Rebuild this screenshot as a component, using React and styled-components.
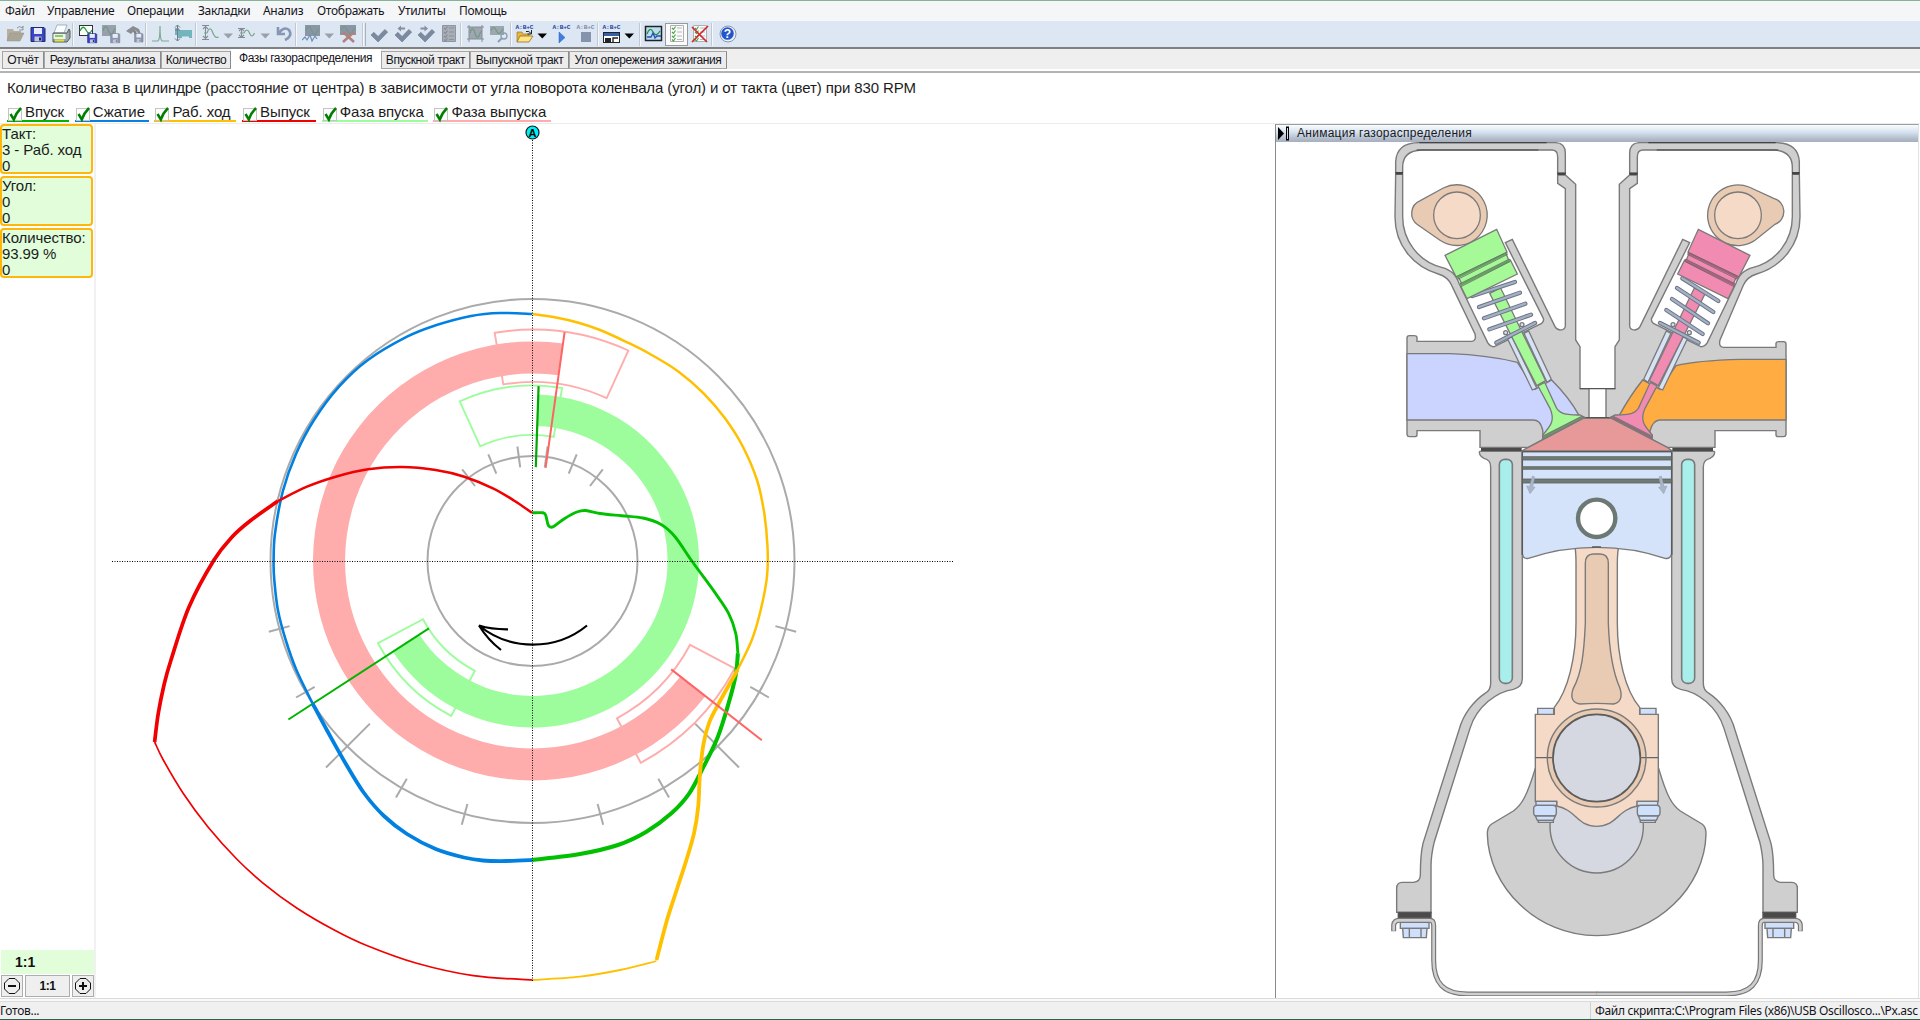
import React from 'react';
import styled, { createGlobalStyle } from 'styled-components';

const Global = createGlobalStyle`
  * { box-sizing: border-box; }
  html, body { margin: 0; padding: 0; }
  body { width: 1920px; height: 1020px; overflow: hidden; background: #fff; }
  svg { display: block; }
`;

const Window = styled.div`
  display: flex;
  flex-direction: column;
  width: 1920px;
  height: 1020px;
  overflow: hidden;
  border-top: 1px solid #86b396;
  border-bottom: 1px solid #2c6450;
  font-family: "Liberation Sans", Arial, sans-serif;
  color: #1c1c1c;
  background: #fff;
`;

const MenuBar = styled.nav`
  display: flex;
  height: 20px;
  flex: none;
  padding-left: 5px;
  background: #f5f6f8;
  font: 12px/20px "Noto Sans", sans-serif;
  color: #15151c;
`;

const MenuItem = styled.span`
  width: ${(p) => p.$w}px;
  flex: none;
  white-space: nowrap;
  letter-spacing: ${(p) => p.$ls || 0}px;
`;

const ToolBar = styled.div`
  display: flex;
  align-items: center;
  height: 26px;
  flex: none;
  padding-left: 3px;
  background: #dde7f4;
`;

const Tool = styled.span`
  display: flex;
  align-items: center;
  justify-content: center;
  flex: none;
  width: ${(p) => p.$w || 23}px;
  height: 23px;
  background: ${(p) => (p.$on ? '#fbfbfb' : 'transparent')};
  border: ${(p) => (p.$on ? '1px solid #9a9a9a' : '0')};
`;

const Sep = styled.span`
  flex: none;
  width: ${(p) => p.$w || 4}px;
  height: 23px;
  border-left: 1px solid #c3c8d0;
  border-right: ${(p) => (p.$double ? '1px solid #a9b0ba' : '0')};
  box-shadow: inset 1px 0 0 #f6f8fb;
  background-clip: content-box;
`;

const TabStrip = styled.div`
  display: flex;
  align-items: flex-end;
  height: 22px;
  flex: none;
  padding-left: 2px;
  background: #efefef;
  border-top: 2px solid #808080;
`;

const Tab = styled.button`
  width: ${(p) => p.$w}px;
  height: ${(p) => (p.$active ? 20 : 18)}px;
  margin: 0;
  padding: ${(p) => (p.$active ? '0 0 3px' : '0 0 1px')};
  border: 1px solid ${(p) => (p.$active ? '#fff' : '#a6a6a6')};
  border-left-width: ${(p) => (p.$active ? 0 : 1)}px;
  border-right-color: ${(p) => (p.$active ? '#fff' : '#8a8a8a')};
  background: ${(p) => (p.$active ? '#fff' : '#ececec')};
  font: 12px/14px "Liberation Sans", Arial, sans-serif;
  letter-spacing: ${(p) => p.$ls || 0}px;
  color: #15151c;
  white-space: nowrap;
  text-align: center;
`;

const TabEdge = styled.div`
  height: 4px;
  flex: none;
  background: #fff;
  border-bottom: 2px solid #b4b4b4;
`;

const Caption = styled.h1`
  margin: 0;
  height: 33px;
  flex: none;
  padding: 6px 0 0 7px;
  font-size: 15px;
  line-height: 18px;
  font-weight: 400;
  white-space: nowrap;
  letter-spacing: ${(p) => p.$ls}px;
`;

const Legend = styled.div`
  display: flex;
  gap: 5.7px;
  height: 17px;
  flex: none;
  padding-left: 7px;
`;

const LegendItem = styled.label`
  display: flex;
  width: ${(p) => p.$w}px;
  height: 16px;
  border-bottom: 2px solid ${(p) => p.$c};
  font-size: 15px;
  line-height: 15px;
  white-space: nowrap;
`;

const LegendText = styled.span`
  margin: -2px 0 0 2px;
  letter-spacing: -0.1px;
`;

const Work = styled.main`
  display: flex;
  flex: 1;
  min-height: 0;
  border-top: 1px solid #ececec;
`;

const Side = styled.aside`
  display: flex;
  flex-direction: column;
  width: 96px;
  flex: none;
  border-right: 2px solid #f1f1f1;
  padding: 0 0 0 1px;
`;

const Card = styled.div`
  width: 93px;
  height: 50px;
  margin: 0 0 2px -1px;
  padding: 0;
  border: 2px solid #ffb60a;
  border-radius: 4px;
  background: #e1fdda;
  font-size: 15px;
  line-height: 16px;
  letter-spacing: -0.1px;
  white-space: nowrap;
  overflow: hidden;
`;

const Scale = styled.div`
  margin-top: auto;
  height: 24px;
  padding-left: 14px;
  background: #e1fdda;
  font: bold 14px/24px "Liberation Sans", sans-serif;
  color: #111;
`;

const ZoomRow = styled.div`
  display: flex;
  gap: 2px;
  padding-top: 1px;
  margin-bottom: 1px;
`;

const ZoomButton = styled.button`
  display: flex;
  align-items: center;
  justify-content: center;
  width: ${(p) => p.$w}px;
  height: 22px;
  padding: 0;
  border: 1px solid #adadad;
  background: #efefef;
  font: bold 12px "Liberation Sans", sans-serif;
  letter-spacing: -0.4px;
  color: #111;
`;

const ChartPane = styled.section`
  width: 1179px;
  flex: none;
`;

const EnginePane = styled.section`
  display: flex;
  flex-direction: column;
  width: 644px;
  flex: none;
  border-left: 1px solid #8a8a8a;
  border-right: 1px solid #e2e2e2;
  border-top: 1px solid #9d9d9d;
`;

const PaneHeader = styled.header`
  display: flex;
  align-items: center;
  gap: 6px;
  height: 17px;
  flex: none;
  padding-left: 2px;
  background: linear-gradient(#fbfcfe, #d3e0ef 45%, #b3bccb 80%, #a6afbf);
  font: 12px/17px "Liberation Sans", Arial, sans-serif;
  letter-spacing: 0.27px;
  color: #1a1a1a;
`;

const Status = styled.footer`
  display: flex;
  justify-content: space-between;
  height: 21px;
  flex: none;
  border-top: 1px solid #dadada;
  box-shadow: inset 0 2px 0 #fafafa, inset 0 3px 0 #dadada;
  background: #f0f0f0;
  font: 12px/18px "Noto Sans", sans-serif;
  color: #15151c;
`;

const StatusCell = styled.span`
  width: ${(p) => p.$w}px;
  margin-top: 3px;
  padding-left: ${(p) => p.$pad || 0}px;
  border-left: ${(p) => (p.$line ? '1px solid #d0d0d0' : '0')};
  letter-spacing: ${(p) => p.$ls || 0}px;
  white-space: nowrap;
  overflow: hidden;
`;

const Drawing = styled.svg`
  path, circle, rect, line, polygon, ellipse, polyline { vector-effect: non-scaling-stroke; }
`;

/* ---------- toolbar ---------- */

const Ic = ({ children }) => (
  <svg width="20" height="20" viewBox="0 0 20 20" fill="none">{children}</svg>
);
const Drop = ({ on }) => (
  <Tool $w={13}>
    <svg width="13" height="20" viewBox="0 0 13 20"><path d="M1.5 9.5h9.5l-4.700 5z" fill={on ? '#000' : '#9a9fa8'} /></svg>
  </Tool>
);
const Abc = ({ c = '#1c3f9c' }) => (
  <text x="0.5" y="5" fontFamily="Liberation Mono, monospace" fontWeight="700" fontSize="6.2" textLength="18" fill={c}>A:B+C</text>
);
const Disk = ({ x = 0, y = 0, s = 1, c = '#3a44c4', d = '#22286e' }) => (
  <g transform={`translate(${x} ${y}) scale(${s})`}>
    <path d="M1 1h13l1 1v13H1z" fill={c} stroke={d} />
    <path d="M4 1.5h8v6H4z" fill="#e8ecf8" /><path d="M4.500 10h7v5h-7z" fill="#c3c8d8" /><path d="M9 11h2v3H9z" fill={d} />
  </g>
);
const Check = ({ arrow }) => (
  <Ic>
    <path d="M2 11l2.800-2.700 4.300 4.200L15.800 5.500l2.900 2.500L9.100 18z" fill="#7c8a9f" stroke="#697789" strokeWidth=".6" />
    {arrow === 'l' && <path d="M4.500 4.500l3.500-3v2h4v2H8v2z" fill="#8290a5" />}
    {arrow === 'r' && <path d="M12 4.500l-3.500-3v2h-4v2h4v2z" fill="#8290a5" />}
  </Ic>
);
const ListIc = ({ grey, cross }) => (
  <Ic>
    <path d="M3.500 1.500h13v16h-13z" fill={grey ? '#a9aeb6' : '#fafafa'} stroke={grey ? '#8f959e' : '#b0b0b0'} />
    {[4, 8, 12, 15.500].map((y) => (
      <g key={y}>
        <path d={`M5 ${y}l1.500 1.500 2-3`} stroke={grey ? '#868c95' : '#47a043'} strokeWidth="1.100" />
        <path d={`M10 ${y}h5`} stroke={grey ? '#8b9199' : '#b4b8bd'} />
      </g>
    ))}
    {cross && <path d="M2 3l15 15M18 2L2 18" stroke="#d3262a" strokeWidth="1.700" />}
  </Ic>
);
const Scope = ({ c = '#8c95a6', l = '#6d9b84', x = 1, y = 1, w = 16, h = 11 }) => (
  <g>
    <rect x={x} y={y} width={w} height={h} fill={c} />
    <path d={`M${x + 1} ${y + h / 2}q${w / 5}-${h * 0.7} ${w * 0.38} 0t${w * 0.4} 0l1.500-2`} stroke={l} strokeWidth="1.200" />
  </g>
);

const Tools = () => (
  <ToolBar>
    <Tool><Ic>
      <path d="M2 17V5h6l1 2h7v3" fill="#b5b0a2" /><path d="M2 17l3-8h14l-4 8z" fill="#aaa697" stroke="#949082" strokeWidth=".5" />
      <path d="M12 4q3-3 5 0l1-2v4h-4" stroke="#8d939c" />
    </Ic></Tool>
    <Tool><Ic><Disk x={2} y={2.500} /></Ic></Tool>
    <Tool><Ic>
      <path d="M6 1h10l-3 8H3z" fill="#fafdff" stroke="#899" strokeWidth=".7" />
      <path d="M2 9h14l2-4 1 2v7l-3 4H2z" fill="#9aa5a5" stroke="#525c5c" /><path d="M2.500 10h12v5h-12z" fill="#ebf2f0" />
      <path d="M4 12h8" stroke="#6ac02b" strokeWidth="1.500" /><path d="M4 15.500h9v2H4z" fill="#e8e02e" />
    </Ic></Tool>
    <Sep />
    <Tool><Ic>
      <rect x="1.500" y="1.500" width="13" height="10" fill="#fff" stroke="#333" /><path d="M2 7q3-7 6-1t6 0" stroke="#299b37" strokeWidth="1.300" />
      <Disk x={9} y={9} s={0.65} />
    </Ic></Tool>
    <Tool><Ic><Scope c="#9aa0ab" w={14} /><Disk x={9} y={9} s={0.65} c="#8d95ab" d="#7c8497" /></Ic></Tool>
    <Tool><Ic>
      <path d="M2 7l7-5 6 3 2 5-3-1-3-3-4 4z" fill="#888d94" /><path d="M9 7l5 10h3L11 6z" fill="#847b70" /><Disk x={10} y={9} s={0.6} c="#8d95ab" d="#7c8497" />
    </Ic></Tool>
    <Sep />
    <Tool><Ic><path d="M1 17h6q2-1 2-15 0 14 2 15h7" stroke="#7bab8e" strokeWidth="1.200" /></Ic></Tool>
    <Tool><Ic>
      <path d="M1 4h4v2h13v8h-3v-1.500H8V14H4v-3H1z" fill="#72b5bd" /><path d="M3.500 1v16M1 3.500L3.500 1 6 3.500M1 14.500L3.500 17 6 14.500M1 6h5" stroke="#737b86" />
    </Ic></Tool>
    <Sep />
    <Tool><Ic>
      <path d="M4.500 2v13M1 1.500h7M2 5l2.500-2.500L7 5M2 12l2.500 2.500L7 12M1 15.500h7" stroke="#858c96" strokeWidth="1.100" /><path d="M3 9h3q3-8 5.500-1t6 5" stroke="#7ba58b" strokeWidth="1.200" />
    </Ic></Tool>
    <Drop />
    <Tool $w={24}><Ic>
      <path d="M4.500 4v9M1 4.500h7M2 7l2.500-2.500L7 7M2 11l2.500 2.500L7 11M1 13.500h7" stroke="#858c96" strokeWidth="1.100" /><path d="M3 9h4q3-6 5.500 0t5 0" stroke="#7ba58b" strokeWidth="1.200" />
    </Ic></Tool>
    <Drop />
    <Tool><Ic><path d="M4 3v7h7M5 9q5-7 10-3 4 6-4 10" stroke="#8696b3" strokeWidth="2.600" /></Ic></Tool>
    <Sep $w={5} />
    <Tool><Ic><Scope x={3} w={15} /><path d="M0 16l3-3 2 3 3-5 2 6 3-5 2 3" stroke="#6d8fb8" strokeWidth="1.200" /></Ic></Tool>
    <Drop />
    <Tool $w={26}><Ic><Scope x={1} w={16} h={10} /><path d="M4 8l11 10M15 8L4 18" stroke="#b2807f" strokeWidth="2.600" /></Ic></Tool>
    <Sep $w={4} $double />
    <Tool $w={25}><Check /></Tool>
    <Tool><Check arrow="l" /></Tool>
    <Tool><Check arrow="r" /></Tool>
    <Tool><ListIc grey /></Tool>
    <Sep />
    <Tool><Ic><Scope x={3} y={3} w={13} h={12} c="#a0a6af" /><path d="M1 3h17M3 1v17M16 1v17M1 15h17" stroke="#858c96" /></Ic></Tool>
    <Tool><Ic><Scope x={1} y={2} w={14} h={9} c="#a0a6af" /><circle cx="15" cy="12" r="3" stroke="#8d9dac" strokeWidth="1.300" /><path d="M13 14l-4 4" stroke="#8d9dac" strokeWidth="2" /></Ic></Tool>
    <Sep />
    <Tool $w={22}><Ic>
      <Abc /><path d="M2 18V8h5l1 2h6v3" fill="#e4b445" stroke="#9a6d14" strokeWidth=".6" /><path d="M2 18l3-6h13l-4 6z" fill="#ffe48b" stroke="#9a6d14" strokeWidth=".8" />
      <path d="M11 7.500q3-1 5 2M16.500 6v4h-4" stroke="#222" />
    </Ic></Tool>
    <Drop on />
    <Tool $w={25}><Ic><Abc /><path d="M7 8v11l6-5.500z" fill="#3f7fe0" stroke="#2b61b8" strokeWidth=".5" /></Ic></Tool>
    <Tool><Ic><Abc c="#7b8aa8" /><path d="M5 8h10v10H5z" fill="#8593ab" /></Ic></Tool>
    <Sep $w={3} />
    <Tool><Ic>
      <Abc /><rect x="1.500" y="8.500" width="16" height="10" fill="#fff" stroke="#222" /><path d="M2 9h15v3H2z" fill="#3360a8" /><path d="M3 14h6v4H3z" fill="#222" /><path d="M11 18v-4h5" stroke="#222" strokeWidth="1.400" />
    </Ic></Tool>
    <Drop on />
    <Tool $w={3} />
    <Sep />
    <Tool $w={22}><Ic>
      <rect x="1.500" y="2.500" width="16" height="14" fill="#bcdcf6" stroke="#222" strokeWidth="1.500" /><path d="M3 10q3-8 6-2t7-1" stroke="#23923c" strokeWidth="1.300" />
      <path d="M3 13h4l2-4 2 5 2-2h4" stroke="#284fb5" strokeWidth="1.300" />
    </Ic></Tool>
    <Tool $on><ListIc /></Tool>
    <Tool><ListIc cross /></Tool>
    <Sep $w={5} />
    <Tool><Ic>
      <circle cx="10" cy="10" r="8" fill="#eef3fb" stroke="#8496b4" /><circle cx="9.500" cy="9.500" r="6.300" fill="#2357c9" />
      <text x="9.500" y="14" fontFamily="Liberation Sans, sans-serif" fontWeight="700" fontSize="12" fill="#fff" textAnchor="middle">?</text>
    </Ic></Tool>
  </ToolBar>
);

/* ---------- polar diagram ---------- */

const CX = 532.5;
const CY = 561;
const pt = (deg, r) => {
  const a = (deg * Math.PI) / 180;
  return [CX + r * Math.sin(a), CY - r * Math.cos(a)];
};
const f = (v) => v.toFixed(1);
const P = (deg, r) => pt(deg, r).map(f).join(',');

const band = (a, b, r1, r2) => {
  const big = b - a > 180 ? 1 : 0;
  return `M${P(a, r1)}L${P(a, r2)}A${r2},${r2} 0 ${big} 1 ${P(b, r2)}L${P(b, r1)}A${r1},${r1} 0 ${big} 0 ${P(a, r1)}Z`;
};

const smooth = (pts) => {
  let d = `M${pts[0]}`;
  for (let i = 0; i < pts.length - 1; i++) {
    const a = pts[i - 1] || pts[i];
    const b = pts[i];
    const c = pts[i + 1];
    const e = pts[i + 2] || c;
    d += `C${f(b[0] + (c[0] - a[0]) / 6)},${f(b[1] + (c[1] - a[1]) / 6)} ${f(c[0] - (e[0] - b[0]) / 6)},${f(c[1] - (e[1] - b[1]) / 6)} ${c}`;
  }
  return d;
};

const blueTop = [[532, 314], [500, 313], [471, 316], [435.7, 325.3], [407, 336.7], [367.9, 360], [339, 386.7], [314, 420], [296, 454], [282.9, 491], [275, 533.3], [273.6, 563], [274.3, 580], [277.9, 610], [285.7, 640], [296.4, 670], [312.5, 703.3]];
const blueLow = [[312.5, 703.3], [326.8, 730], [344.6, 761.7], [364, 793], [384, 816], [407, 834], [435.7, 849], [464, 857.5], [483, 860.5], [506.7, 861], [532.5, 860]];
const greenTop = [[532.5, 512.8], [542.9, 512.8], [545.7, 515.3], [547.9, 524.3], [549.6, 526.7], [553.6, 526.5], [564.3, 518.7], [576.8, 512], [585.7, 510.5], [600, 513.5], [621.4, 515.7], [642.9, 518], [660.7, 524.3], [675, 536.7], [691.5, 560.5], [714.3, 591.7], [728.6, 613.3], [735.7, 633.3], [737.9, 653.3]];
const greenLow = [[737.9, 653.3], [735.7, 675], [728.6, 703.3], [717.9, 736.7], [703.6, 766.7], [689.3, 793.3], [671.4, 813.3], [646.4, 831.7], [617.9, 845], [578.6, 854.3], [532.5, 860]];
const yellowTop = [[532.5, 314], [557, 317.7], [578.6, 322.7], [600, 330], [625, 341.3], [650, 354], [678.6, 371.7], [703.6, 393.3], [725, 418.3], [742.9, 446.7], [757, 480], [764.3, 513.3], [767.5, 546.7], [767, 576.7], [760.7, 610], [751.8, 640], [737.5, 670]];
const yellowLow = [[737.5, 670], [717.9, 705], [708.9, 723.3], [703.6, 743.3], [700, 773.3], [698.2, 806.7], [694, 833.3], [686.4, 860], [677, 889], [667, 920], [656.5, 960]];
const yellowEnd = [[656.5, 961], [620, 970], [580, 976.7], [532.5, 980]];
const redLow = [[532.5, 980], [473.3, 975.7], [416.7, 963.3], [366.7, 945.5], [333.3, 929.5], [296.7, 908], [263.3, 883.3], [236.7, 859], [208, 827], [183.3, 793.5], [163.3, 760], [154.6, 742]];
const redUp = [[154.6, 742], [158.3, 713.3], [164, 685], [171, 660], [189, 607], [214, 560], [232, 537], [250, 521], [277.9, 501]];
const redTop = [[277.9, 501], [307, 486.7], [335.7, 476.7], [367.9, 469.3], [401.8, 467], [435.7, 470], [464.3, 476.7], [492.9, 488.3], [514.3, 500.7], [532, 512.8]];

const outerTicks = [105, 120, 135, 150, 165, 195, 210, 225, 240, 255];
const innerTicks = [-37.5, -22.5, -7.5, 7.5, 22.5, 37.5];

const Ray = ({ a, r1, r2, ...rest }) => <path d={`M${P(a, r1)}L${P(a, r2)}`} {...rest} />;

const Chart = () => (
  <svg width="1179" height="874" viewBox="96 124 1179 874" fill="none">
    <g stroke="#aaaaaa" strokeWidth="2">
      <circle cx={CX} cy={CY} r="262" />
      <circle cx={CX} cy={CY} r="105" />
      {outerTicks.map((a) => <Ray key={a} a={a} r1={a % 90 === 45 ? 230 : 251.500} r2={a % 90 === 45 ? 292 : 273} />)}
      {innerTicks.map((a) => <Ray key={a} a={a} r1={94.500} r2={115.500} />)}
    </g>
    <g stroke="#9dfd9d" strokeWidth="1.900">
      <path d={band(-24.500, 9.700, 126, 175.500)} />
      <path d={band(207.700, 242, 124, 175)} />
    </g>
    <g stroke="#ffacac" strokeWidth="1.900">
      <path d={band(-9.400, 24.500, 179, 231.300)} />
      <path d={band(118, 151.800, 178.500, 229)} />
    </g>
    <path d={band(128, 368, 187.500, 219.500)} fill="#ffacac" />
    <path d={band(2, 237, 135, 166.500)} fill="#9dfd9d" />
    <Ray a={2} r1={94} r2={175} stroke="#00a800" strokeWidth="2.200" />
    <Ray a={237} r1={123.500} r2={291} stroke="#00b400" strokeWidth="2" />
    <path d={smooth(blueTop)} stroke="#0080e0" strokeWidth="2.600" />
    <path d={smooth(blueLow)} stroke="#0080e0" strokeWidth="3.800" />
    <path d={smooth(greenTop)} stroke="#00c000" strokeWidth="2.900" />
    <path d={smooth(greenLow)} stroke="#00c000" strokeWidth="4" />
    <path d={smooth(yellowTop)} stroke="#ffc000" strokeWidth="2.500" />
    <path d={smooth(yellowLow)} stroke="#ffc000" strokeWidth="3.800" />
    <path d={smooth(yellowEnd)} stroke="#ffc000" strokeWidth="1.800" />
    <path d={smooth(redLow)} stroke="#f00000" strokeWidth="1.700" />
    <path d={smooth(redUp)} stroke="#f00000" strokeWidth="3.700" />
    <path d={smooth(redTop)} stroke="#f00000" strokeWidth="2.500" />
    <Ray a={128} r1={176} r2={291} stroke="#ff6464" strokeWidth="2" />
    <Ray a={8} r1={94} r2={231} stroke="#ff6464" strokeWidth="2" />
    <path d="M112 561.500H953M532.500 140V981" stroke="#000" strokeDasharray="1 1.500" strokeWidth="1" />
    <path d="M587 625.500C556 651 510 651 479 625.500Q492 629.500 508 629.300M479 625.500Q488 640 501 650" stroke="#000" strokeWidth="2.200" />
    <circle cx="532.500" cy="132.500" r="6.500" fill="#00f0f8" stroke="#0a2020" strokeWidth="1.200" />
    <text x="532.500" y="136.500" fontFamily="Liberation Sans, sans-serif" fontWeight="700" fontSize="11" fill="#000" textAnchor="middle">A</text>
  </svg>
);

/* ---------- engine section ---------- */

const LINE = '#7a7a7a';
const GREY = '#cfcfcf';
const T = 1 / 3;

/* k lowers the top port flange, e shortens the port */
const headPath = (k, e) =>
  `M47,133 L45,260 C45,345 100,410 175,432 C195,438 208,450 215,466 L285,${612 + k} Q290,${632 + k} 275,${634 + k} L${111 + e},${634 + k}
   L${111 + e},${622 + k} Q${110 + e},${617 + k} ${102 + e},${617 + k} L${88 + e},${617 + k} Q${81 + e},${617 + k} ${81 + e},${624 + k} L${81 + e},914 Q${82 + e},920 ${88 + e},920 L${104 + e},920 Q${111 + e},920 ${111 + e},914 L${111 + e},902 L300,902
   L300,952 L445,952 L610,863 L627,863 L627,776 L600,776 L600,650 L587,630 L587,163 L556,135 L533,135 L533,160 L556,176
   L556,588 Q555,600 540,600 Q530,599 525,590 L397,328 L376,338 L490,565 Q493,573 485,580 L343,650 Q331,651 323,638
   L238,462 C228,435 215,420 185,412 C115,395 68,330 68,260 L68,133 Z`;

const Cover = () => (
  <g>
    <path d="M47,128 V95 Q50,38 118,38 H525 Q556,38 556,70 V130 H533 V80 Q533,60 515,60 H125 Q68,62 68,112 V128 Z" fill={GREY} stroke={LINE} />
    <path d="M118,38H500M110,60H475" stroke="#444" strokeWidth="1.100" />
    <path d="M46,130H69M532,131H557" stroke="#444" strokeWidth="2.500" />
  </g>
);

const Coil = ({ c: [x1, y1, x2, y2] }) => (
  <g strokeLinecap="round">
    <path d={`M${x1},${y1}L${x2},${y2}`} stroke="#6c7482" strokeWidth="4.300" />
    <path d={`M${x1},${y1}L${x2},${y2}`} stroke="#a3b0c6" strokeWidth="2.300" />
  </g>
);

const Valve = ({ fill, dark, coils, lobe }) => (
  <g stroke={LINE} strokeWidth="1.300">
    <path d={lobe} fill="#e8cbb2" />
    <circle cx="231" cy="256" r="70" fill="#f6dac8" />
    <path d="M383,627L396,621L470,774L457,780Z M432,610L446,603L514,748L501,757Z" fill="#d6e2f6" />
    <circle cx="377" cy="608" r="6" fill="#d6e2f6" /><circle cx="426" cy="584" r="6" fill="#d6e2f6" />
    <path d="M329,490L362,474L497,752L470,767Z" fill={fill} />
    <path d="M474,768L494,757L530,835C545,857 575,855 600,855L613,862L488,927V915C515,885 525,870 510,835Z" fill={fill} />
    <path d="M488,919L605,859L614,862L488,927Z" fill={dark} />
    {coils.map((c) => <Coil key={c.join()} c={c} />)}
    <Coil c={[349, 638, 465, 579]} />
    <path d="M195,376L350,298L381,366L379,373L385,388L391,390L412,432L261,506L242,468L244,460L238,446L228,440Z" fill={fill} />
    <path d="M230,443L381,369M241,465L390,391" stroke={dark} strokeWidth="2.400" />
    <path d="M228,440L381,366M233,448L383,373M240,461L388,387M243,470L391,394" stroke="#666" strokeWidth=".8" />
  </g>
);

const leftCoils = [[277, 498, 405, 456], [297, 531, 420, 488], [312, 565, 436, 521], [328, 598, 453, 554]];
const rightCoils = [[290, 513, 398, 445], [305, 546, 414, 474], [321, 580, 429, 507], [337, 612, 446, 540]];
const leftLobe = 'M190,174A91,91 0 1 1 180,331L113,284A41,41 0 0 1 121,212Z';
const rightLobe = 'M198,171A91,91 0 1 1 180,331L120,283A41,41 0 0 1 124,205Z';

const CylinderSide = () => (
  <g stroke={LINE}>
    <path d="M300,64H427V745C427,765 415,775 400,778C350,785 290,830 270,895L163,1235Q153,1275 153,1310V1447H50V1375Q50,1357 67,1357H100Q121,1355 121,1335C121,1300 122,1270 129,1240L237,900C250,850 285,810 315,790Q332,782 332,760V110C332,95 325,88 312,85Q298,78 298,66Z" fill={GREY} />
    <rect x="358" y="88" width="39" height="672" rx="16" fill="#a8eeeb" strokeWidth="1.600" />
    <rect x="303" y="54" width="122" height="9" fill="#4b4b4b" stroke="none" />
    <rect x="55" y="1447" width="98" height="18" fill="#4a4a4a" stroke="#555" />
    <rect x="61" y="1477" width="86" height="18" fill="#cfe0fc" />
    <path d="M68,1495H141L139,1523H70Z M88,1495V1523M123,1495V1523" fill="#cfe0fc" />
    <g fill="none">
      <path d="M41,1504V1485Q43,1471 57,1471H150Q161,1471 161,1487V1590C161,1660 191,1692 263,1692H652" stroke="#777" strokeWidth="5" />
      <path d="M41,1502V1485Q43,1471 57,1471H150Q161,1471 161,1487V1590C161,1660 191,1692 263,1692H652" stroke={GREY} strokeWidth="2.600" />
    </g>
  </g>
);

const RodBolt = () => (
  <g fill="#cfe0fc" stroke={LINE}>
    <rect x="473" y="835" width="48" height="18" />
    <rect x="468" y="1114" width="62" height="12" />
    <rect x="461" y="1126" width="68" height="32" rx="10" />
    <path d="M466,1158H526L520,1171H472Z" /><rect x="475" y="1171" width="45" height="6" />
  </g>
);

const Mirror = ({ w, children }) => (
  <>{children}<g transform={`translate(${w} 0) scale(-1 1)`}>{children}</g></>
);

const Engine = () => (
  <Drawing width="642" height="854" viewBox="1276 142 642 854" fill="none" strokeWidth="1.400">
    <g transform={`translate(1380 130) scale(${T})`}>
      <path d={headPath(0, 0)} fill={GREY} stroke={LINE} />
      <path d="M81,671H210C290,674 360,684 412,697L465,778L515,750C555,790 580,825 597,856L560,872L490,928L488,900C482,878 475,870 458,870H81Z" fill="#cad4fe" stroke={LINE} />
      <Cover />
    </g>
    <g transform={`translate(1570 130) scale(${T})`}>
      <g transform="translate(735 0) scale(-1 1)">
        <path d={headPath(18, 6)} fill={GREY} stroke={LINE} />
        <Cover />
      </g>
      <path d="M648,688H510C430,690 370,694 318,707L270,778L218,750C190,785 165,825 148,856L175,872L240,925V903Q248,872 268,870H648Z" fill="#ffac42" stroke={LINE} />
    </g>
    <g transform={`translate(1380 430) scale(${T})`}>
      <path d="M425,63L445,52L612,-36H692L862,52L877,63Z" fill="#e69998" stroke={LINE} />
      <path d="M600,-124H706M612,-37H692" stroke="#555" />
    </g>
    <g transform={`translate(1380 130) scale(${T})`}>
      <Valve fill="#a5f997" dark="#62a35f" coils={leftCoils} lobe={leftLobe} />
    </g>
    <g transform={`translate(1570 130) scale(${T}) translate(735 0) scale(-1 1)`}>
      <Valve fill="#f28bb2" dark="#a95f7d" coils={rightCoils} lobe={rightLobe} />
    </g>
    <g transform={`translate(1380 430) scale(${T})`}>
      <Mirror w={1302}><CylinderSide /></Mirror>
      <path d="M466,1015C440,1100 425,1125 400,1143L335,1182Q322,1190 322,1212C325,1370 470,1517 650,1517S975,1370 978,1212Q978,1190 966,1182L901,1143C876,1125 861,1100 836,1015Z" fill={GREY} stroke={LINE} />
      <circle cx="650" cy="1189" r="140" fill="#d5d8e0" stroke={LINE} />
      <path d="M585,350C588,370 588,380 588,400V580C588,680 565,780 523,832V853H466V1114H530V1128C590,1140 590,1189 650,1189S711,1140 772,1128V1114H835V853H779V832C735,780 712,680 712,580V400C712,380 712,370 716,350Z" fill="#f6dac8" stroke={LINE} />
      <path d="M616,400Q616,372 640,372H660Q685,372 685,400V580C688,670 700,730 720,775Q732,815 700,822Q650,818 600,822Q565,815 580,775C605,730 612,670 616,580Z" fill="#e8cbb2" stroke={LINE} />
      <path d="M466,983H835" stroke="#666" />
      <ellipse cx="650" cy="984" rx="148" ry="147" fill="#e8cbb2" stroke={LINE} />
      <circle cx="650" cy="984" r="131" fill="#d5d8e0" stroke="#5c5c5c" strokeWidth="1.800" />
      <path d="M502,983H519M781,983H798" stroke="#666" />
      <Mirror w={1301}><RodBolt /></Mirror>
      <path d="M427,65H875V372Q870,388 855,385C790,363 720,352 650,352S510,363 445,385Q430,388 427,372Z" fill="#d4e2fa" stroke={LINE} />
      <path d="M427,65H875M427,65V375M875,65V375" stroke="#5a5a5a" />
      <path d="M427,80H875V90H427ZM427,110H875V118H427ZM427,147H875V159H427Z" fill="#707b76" stroke="#59615d" strokeWidth=".8" />
      <circle cx="650" cy="265" r="56" fill="#fff" stroke="#6c7873" strokeWidth="4.400" />
      <path d="M636,351H663" stroke="#555" />
      <Mirror w={1301}>
        <path d="M457,138L464,141L458,170L465,172L450,191L440,168L449,170Z" fill="#abb5c9" stroke="#98a2b6" strokeWidth=".6" />
      </Mirror>
    </g>
  </Drawing>
);

/* ---------- page ---------- */

const menu = [['Файл', 42], ['Управление', 80], ['Операции', 71], ['Закладки', 65], ['Анализ', 54], ['Отображать', 81], ['Утилиты', 61], ['Помощь', 60]];
const tabs = [['Отчёт', 42], ['Результаты анализа', 117], ['Количество', 70], ['Фазы газораспределения', 150, true], ['Впускной тракт', 89], ['Выпускной тракт', 99], ['Угол опережения зажигания', 158]];
const legend = [['Впуск', 62, '#00b400'], ['Сжатие', 74, '#0a80e0'], ['Раб. ход', 82, '#ffc000'], ['Выпуск', 74, '#f00000'], ['Фаза впуска', 106, '#9dfd9d'], ['Фаза выпуска', 118, '#ffacac']];
const cards = [['Такт:', '3 - Раб. ход', '0'], ['Угол:', '0', '0'], ['Количество:', '93.99 %', '0']];

const Box = () => (
  <svg width="16" height="17" viewBox="0 0 16 17" fill="none">
    <rect x="1.500" y="2.500" width="13" height="12" fill="#fdfdfd" stroke="#c4c4c4" />
    <path d="M3.500 8l3.300 5.500Q9 7 14 2" stroke="#008000" strokeWidth="2.500" />
  </svg>
);

const Round = ({ plus }) => (
  <svg width="18" height="18" viewBox="0 0 18 18" fill="none" stroke="#111">
    <path d="M6 1.500h6L16.500 6v6L12 16.500H6L1.500 12V6z" />
    <path d={plus ? 'M5 9h8M9 5v8' : 'M5 9h8'} strokeWidth="2" />
  </svg>
);

export default function App() {
  return (
    <Window>
      <Global />
      <MenuBar>{menu.map(([t, w]) => <MenuItem key={t} $w={w} $ls={-0.3}>{t}</MenuItem>)}</MenuBar>
      <Tools />
      <TabStrip>{tabs.map(([t, w, a]) => <Tab key={t} $w={w} $active={a} $ls={-0.38}>{t}</Tab>)}</TabStrip>
      <TabEdge />
      <Caption $ls={-0.12}>Количество газа в цилиндре (расстояние от центра) в зависимости от угла поворота коленвала (угол) и от такта (цвет) при 830 RPM</Caption>
      <Legend>
        {legend.map(([t, w, c]) => (
          <LegendItem key={t} $w={w} $c={c}><Box /><LegendText>{t}</LegendText></LegendItem>
        ))}
      </Legend>
      <Work>
        <Side>
          {cards.map((c) => <Card key={c[0]}>{c.map((l, i) => <div key={i}>{l}</div>)}</Card>)}
          <Scale>1:1</Scale>
          <ZoomRow>
            <ZoomButton $w={22}><Round /></ZoomButton>
            <ZoomButton $w={46}>1:1</ZoomButton>
            <ZoomButton $w={22}><Round plus /></ZoomButton>
          </ZoomRow>
        </Side>
        <ChartPane><Chart /></ChartPane>
        <EnginePane>
          <PaneHeader>
            <svg width="13" height="15" viewBox="0 0 13 15"><path d="M0 1l6 6.500L0 14z" fill="#000" /><rect x="8.500" y="1" width="2" height="13" fill="#ddd" stroke="#000" /></svg>
            Анимация газораспределения
          </PaneHeader>
          <Engine />
        </EnginePane>
      </Work>
      <Status>
        <StatusCell $w={400} $ls={-0.3}>Готов...</StatusCell>
        <StatusCell $w={330} $pad={4} $line $ls={-0.34}>Файл скрипта:C:\Program Files (x86)\USB Oscillosco...\Px.asc</StatusCell>
      </Status>
    </Window>
  );
}
